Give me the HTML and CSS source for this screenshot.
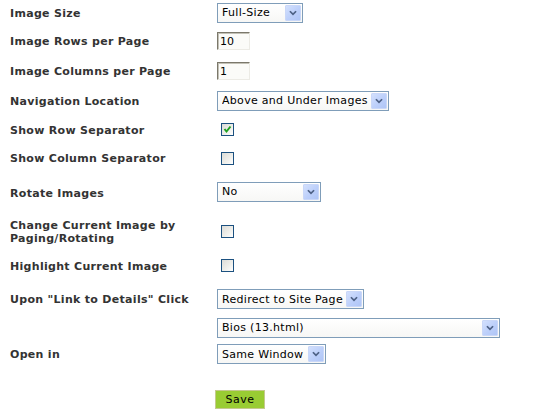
FILE: index.html
```html
<!DOCTYPE html>
<html lang="en">
<head>
<meta charset="utf-8">
<title>Gallery Settings</title>
<link rel="stylesheet" href="styles.css">
</head>
<body>
<form class="settings">
  <div class="lbl">Image Size</div>
  <div class="ctl">
    <span class="sel w-size"><select><option>Full-Size</option></select><span class="arrow"><svg viewBox="0 0 16 16"><polyline points="4.5,6 8,9.5 11.5,6"/></svg></span></span>
  </div>

  <div class="lbl">Image Rows per Page</div>
  <div class="ctl"><input class="txt" type="text" value="10"></div>

  <div class="lbl">Image Columns per Page</div>
  <div class="ctl"><input class="txt" type="text" value="1"></div>

  <div class="lbl">Navigation Location</div>
  <div class="ctl">
    <span class="sel w-nav"><select><option>Above and Under Images</option></select><span class="arrow"><svg viewBox="0 0 16 16"><polyline points="4.5,6 8,9.5 11.5,6"/></svg></span></span>
  </div>

  <div class="lbl">Show Row Separator</div>
  <div class="ctl"><span class="cb"><svg viewBox="0 0 11 11"><polyline points="2.5,5 4.5,7.5 8.5,2.5"/></svg></span></div>

  <div class="lbl">Show Column Separator</div>
  <div class="ctl"><span class="cb"></span></div>

  <div class="lbl lbl-low">Rotate Images</div>
  <div class="ctl">
    <span class="sel w-rot"><select><option>No</option></select><span class="arrow"><svg viewBox="0 0 16 16"><polyline points="4.5,6 8,9.5 11.5,6"/></svg></span></span>
  </div>

  <div class="lbl">Change Current Image by<br>Paging/Rotating</div>
  <div class="ctl"><span class="cb"></span></div>

  <div class="lbl">Highlight Current Image</div>
  <div class="ctl"><span class="cb"></span></div>

  <div class="lbl">Upon "Link to Details" Click</div>
  <div class="ctl">
    <span class="sel w-link"><select><option>Redirect to Site Page</option></select><span class="arrow"><svg viewBox="0 0 16 16"><polyline points="4.5,6 8,9.5 11.5,6"/></svg></span></span>
  </div>

  <div class="lbl"></div>
  <div class="ctl">
    <span class="sel w-page"><select><option>Bios (13.html)</option></select><span class="arrow"><svg viewBox="0 0 16 16"><polyline points="4.5,6 8,9.5 11.5,6"/></svg></span></span>
  </div>

  <div class="lbl">Open in</div>
  <div class="ctl">
    <span class="sel w-open"><select><option>Same Window</option></select><span class="arrow"><svg viewBox="0 0 16 16"><polyline points="4.5,6 8,9.5 11.5,6"/></svg></span></span>
  </div>

  <div class="lbl"></div>
  <div class="ctl ctl-end"><button class="save" type="button">Save</button></div>
</form>
</body>
</html>
```

FILE: styles.css
```css
html, body {
  margin: 0;
  padding: 0;
  background: #fff;
}

body {
  font-family: "DejaVu Sans", Verdana, sans-serif;
  font-size: 11px;
  color: #000;
}

.settings {
  display: grid;
  grid-template-columns: 207px 1fr;
  grid-template-rows: 25px 31px 29px 31px 27px 30px 37px 43px 25px 42px 15px 38px 46px;
  padding-left: 10px;
  align-items: center;
}

.lbl {
  font-weight: bold;
  color: #333;
  line-height: 13px;
  letter-spacing: 0.3px;
  padding-top: 1px;
}

.lbl-low {
  padding-top: 4px;
}

.ctl {
  display: flex;
  align-items: center;
}

.ctl-end {
  align-self: end;
  padding-bottom: 10px;
}

/* dropdowns */
.sel {
  position: relative;
  display: inline-block;
  height: 20px;
  box-sizing: border-box;
  border: 1px solid #7f9db9;
  background: #fff;
}

.sel select {
  appearance: none;
  -webkit-appearance: none;
  border: 0;
  outline: 0;
  margin: 0;
  width: 100%;
  height: 18px;
  padding: 0 0 0 4px;
  background: linear-gradient(#fff, #f7f7f5);
  font-family: inherit;
  font-size: 11px;
  letter-spacing: 0.3px;
  color: #000;
}

.sel .arrow {
  position: absolute;
  top: 1px;
  right: 1px;
  width: 16px;
  height: 16px;
  box-sizing: border-box;
  border: 1px solid #c9d7f8;
  border-radius: 1px;
  background: linear-gradient(135deg, #d3e0fd 0%, #bccffa 55%, #afc5f6 100%);
}

.sel .arrow svg {
  display: block;
  width: 14px;
  height: 14px;
  margin: 0;
}

.sel .arrow polyline {
  fill: none;
  stroke: #4d6185;
  stroke-width: 2;
}

.w-size { width: 86px; }
.w-nav  { width: 172px; }
.w-rot  { width: 104px; }
.w-link { width: 147px; }
.w-page { width: 283px; }
.w-open { width: 109px; }

/* text fields */
.txt {
  width: 33px;
  height: 18px;
  box-sizing: border-box;
  margin: 0;
  padding: 1px 0 0 2px;
  border: 1px solid;
  border-color: #7b786b #ecebe5 #ecebe5 #7b786b;
  box-shadow: inset 1px 1px 0 #c3c1b6;
  background: #fbfbf8;
  font-family: inherit;
  font-size: 11px;
  color: #000;
  outline: 0;
}

/* checkboxes */
.cb {
  display: block;
  width: 13px;
  height: 13px;
  box-sizing: border-box;
  margin-left: 4px;
  border: 1px solid #1c5180;
  background: linear-gradient(135deg, #dcdcd7 0%, #f0f0ec 60%, #fff 100%);
}

.cb svg {
  display: block;
  width: 11px;
  height: 11px;
}

.cb polyline {
  fill: none;
  stroke: #21a121;
  stroke-width: 2;
}

/* submit */
.save {
  margin-left: -2px;
  width: 50px;
  height: 19px;
  padding: 0 0 1px;
  border: 1px solid #c5c98f;
  background: #99cc33;
  font-family: inherit;
  font-size: 11px;
  letter-spacing: 0.5px;
  color: #000;
}
```
